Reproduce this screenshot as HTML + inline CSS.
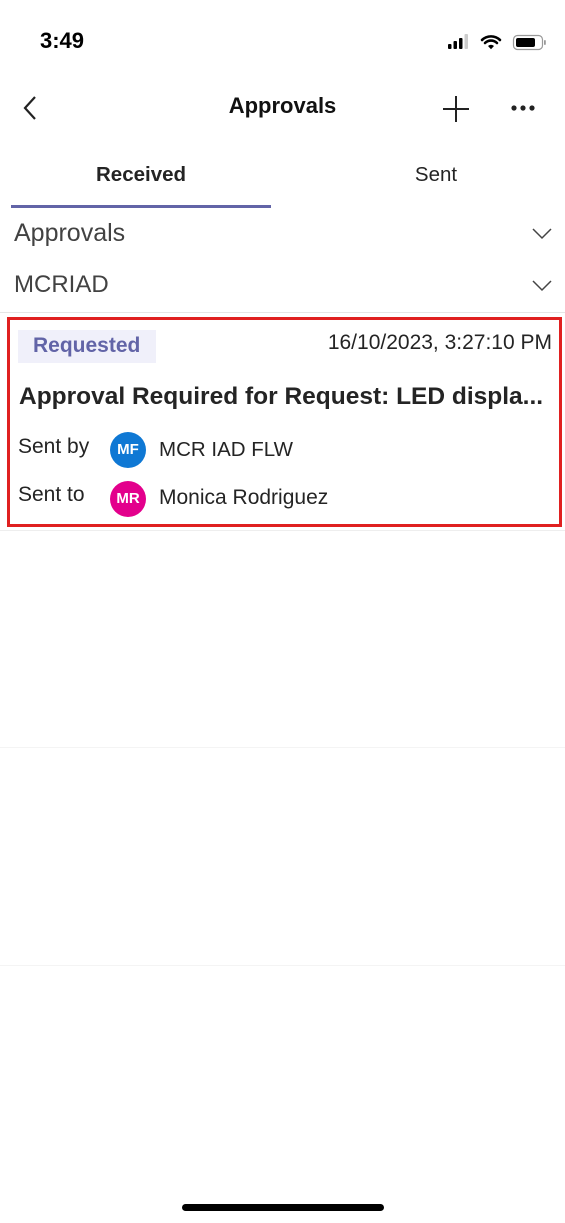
<!DOCTYPE html>
<html><head><meta charset="utf-8"><style>
*{margin:0;padding:0;box-sizing:border-box}
body{width:565px;height:1223px;background:#fff;font-family:"Liberation Sans",Arial,sans-serif;position:relative;overflow:hidden;color:#242424}
.a{position:absolute;white-space:nowrap}
</style></head><body>
<div class="a" style="left:40px;top:28px;font-size:22px;font-weight:bold;color:#000">3:49</div>
<svg class="a" style="left:446px;top:32px" width="104" height="20" viewBox="0 0 104 20">
<rect x="2" y="12" width="3.5" height="5" rx="1" fill="#000"/><rect x="7.5" y="9" width="3.5" height="8" rx="1" fill="#000"/><rect x="13" y="6" width="3.5" height="11" rx="1" fill="#000"/><rect x="18.5" y="2" width="3.5" height="15" rx="1" fill="#ccc"/>
<path d="M36 8a13 13 0 0 1 18 0M39 11a8.5 8.5 0 0 1 12 0" stroke="#000" stroke-width="2.6" fill="none" stroke-linecap="round"/><path d="M42 14l3 3.3 3-3.3a4.2 4.2 0 0 0-6 0z" fill="#000"/>
<rect x="67.5" y="3.5" width="29" height="14" rx="4" fill="none" stroke="#999" stroke-width="1.2"/><rect x="70" y="6" width="19" height="9" rx="2" fill="#000"/><rect x="98" y="8" width="1.8" height="5" rx="1" fill="#999"/>
</svg>
<svg class="a" style="left:20px;top:95px" width="20" height="26"><path d="M15 2L5 13l10 11" stroke="#222" stroke-width="2.2" fill="none"/></svg>
<div class="a" style="left:0;width:565px;text-align:center;top:93px;font-size:22px;font-weight:bold;color:#111">Approvals</div>
<svg class="a" style="left:442px;top:95px" width="28" height="28"><path d="M14 1v26M1 14h26" stroke="#222" stroke-width="2"/></svg>
<svg class="a" style="left:510px;top:103px" width="26" height="10"><circle cx="4" cy="5" r="2.6" fill="#222"/><circle cx="13" cy="5" r="2.6" fill="#222"/><circle cx="22" cy="5" r="2.6" fill="#222"/></svg>
<div class="a" style="left:11px;width:260px;text-align:center;top:163px;font-size:20.5px;font-weight:bold;color:#242424">Received</div>
<div class="a" style="left:306px;width:260px;text-align:center;top:163px;font-size:20.5px;color:#242424">Sent</div>
<div class="a" style="left:11px;top:205px;width:260px;height:3px;background:#6264a7"></div>
<div class="a" style="left:14px;top:219px;font-size:25px;color:#424242">Approvals</div>
<svg class="a" style="left:532px;top:228px" width="20" height="12"><path d="M1 1l9 9 9-9" stroke="#444" stroke-width="1.5" fill="none"/></svg>
<div class="a" style="left:14px;top:271px;font-size:24px;color:#424242">MCRIAD</div>
<svg class="a" style="left:532px;top:280px" width="20" height="12"><path d="M1 1l9 9 9-9" stroke="#444" stroke-width="1.5" fill="none"/></svg>
<div class="a" style="left:0;top:312px;width:565px;height:1px;background:#e6e6e6"></div>
<div class="a" style="left:7px;top:317px;width:555px;height:210px;border:3px solid #e02020"></div>
<div class="a" style="left:18px;top:330px;width:138px;height:33px;background:#f0f0fa"></div>
<div class="a" style="left:33px;top:334px;font-size:21px;font-weight:bold;color:#6264a7">Requested</div>
<div class="a" style="right:13px;top:331px;font-size:21px;color:#242424">16/10/2023, 3:27:10 PM</div>
<div class="a" style="left:19px;top:383px;font-size:24.5px;font-weight:bold;color:#242424">Approval Required for Request: LED displa...</div>
<div class="a" style="left:18px;top:435px;font-size:21px;color:#242424">Sent by</div>
<div class="a" style="left:110px;top:432px;width:36px;height:36px;border-radius:50%;background:#0f78d4;color:#fff;font-size:15px;font-weight:bold;text-align:center;line-height:36px">MF</div>
<div class="a" style="left:159px;top:438px;font-size:20.5px;color:#242424">MCR IAD FLW</div>
<div class="a" style="left:18px;top:483px;font-size:21px;color:#242424">Sent to</div>
<div class="a" style="left:110px;top:481px;width:36px;height:36px;border-radius:50%;background:#e3008c;color:#fff;font-size:15px;font-weight:bold;text-align:center;line-height:36px">MR</div>
<div class="a" style="left:159px;top:486px;font-size:21px;color:#242424">Monica Rodriguez</div>
<div class="a" style="left:0;top:530px;width:565px;height:1px;background:#eee"></div>
<div class="a" style="left:0;top:747px;width:565px;height:1px;background:#f4f4f4"></div>
<div class="a" style="left:0;top:965px;width:565px;height:1px;background:#f4f4f4"></div>
<div class="a" style="left:182px;top:1204px;width:202px;height:7px;border-radius:4px;background:#000"></div>
</body></html>
